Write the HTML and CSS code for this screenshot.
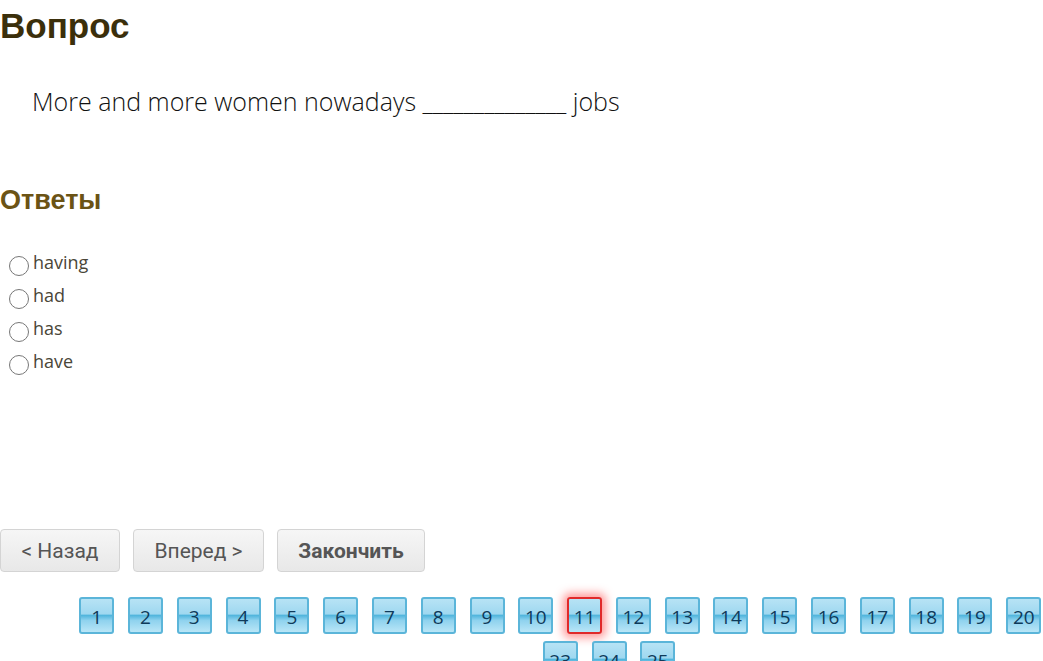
FILE: index.html
```html
<!DOCTYPE html>
<html lang="ru">
<head>
    <meta charset="UTF-8" />
    <title>Вопрос</title>
    <link rel="stylesheet" href="styles.css">
</head>
<body>
    <div class="page">
        <h1>Вопрос</h1>
        <div class="question">More and more women nowadays ______________ jobs</div>

        <h2>Ответы</h2>
        <div class="answers">
            <label class="answer"><input type="radio" name="a" /><span>having</span></label>
            <label class="answer"><input type="radio" name="a" /><span>had</span></label>
            <label class="answer"><input type="radio" name="a" /><span>has</span></label>
            <label class="answer"><input type="radio" name="a" /><span>have</span></label>
        </div>

        <div class="nav">
            <button class="btn">&lt; Назад</button>
            <button class="btn">Вперед &gt;</button>
            <button class="btn btn-finish">Закончить</button>
        </div>

        <div class="pager">
            <a class="page-num">1</a>
            <a class="page-num">2</a>
            <a class="page-num">3</a>
            <a class="page-num">4</a>
            <a class="page-num">5</a>
            <a class="page-num">6</a>
            <a class="page-num">7</a>
            <a class="page-num">8</a>
            <a class="page-num">9</a>
            <a class="page-num">10</a>
            <a class="page-num current">11</a>
            <a class="page-num">12</a>
            <a class="page-num">13</a>
            <a class="page-num">14</a>
            <a class="page-num">15</a>
            <a class="page-num">16</a>
            <a class="page-num">17</a>
            <a class="page-num">18</a>
            <a class="page-num">19</a>
            <a class="page-num">20</a>
            <a class="page-num">21</a>
            <a class="page-num">22</a>
            <a class="page-num">23</a>
            <a class="page-num">24</a>
            <a class="page-num">25</a>
        </div>
    </div>
</body>
</html>
```

FILE: styles.css
```css
body {
    margin: 0;
    background: #ffffff;
    font-family: Roboto, "Liberation Sans", sans-serif;
}

.page {
    width: 1043px;
}

h1 {
    margin: 0;
    padding-top: 4px;
    font-family: "Liberation Sans", Arial, sans-serif;
    font-size: 35px;
    line-height: 44px;
    font-weight: bold;
    color: #3b2f0b;
}

.question {
    padding: 37px 0 0 32px;
    font-family: "Open Sans", sans-serif;
    font-weight: 300;
    font-size: 25px;
    line-height: 32px;
    color: #111;
}

h2 {
    margin: 65px 0 0 0;
    font-family: "Liberation Sans", Arial, sans-serif;
    font-size: 27px;
    line-height: 36px;
    font-weight: bold;
    color: #6b5315;
}

.answers {
    margin-top: 29px;
    display: flex;
    flex-direction: column;
    gap: 3px;
}

.answer {
    display: flex;
    align-items: flex-start;
    height: 30px;
    font-family: "Open Sans", sans-serif;
    font-size: 18px;
    line-height: 30px;
    color: #4a4638;
}

.answer input {
    margin: 9px 4px 0 9px;
    width: 20px;
    height: 20px;
    appearance: none;
    border: 1px solid #777;
    border-radius: 50%;
    background: #fff;
}

.nav {
    margin-top: 153px;
    display: flex;
    gap: 13px;
}

.btn {
    height: 43px;
    padding: 0 10px;
    font-family: Roboto, sans-serif;
    font-size: 21px;
    color: #555;
    background: linear-gradient(#f6f6f6, #e8e8e8);
    border: 1px solid #d4d4d4;
    border-radius: 4px;
}

.btn:first-child {
    width: 120px;
}

.btn:nth-child(2) {
    width: 131px;
}

.btn-finish {
    width: 148px;
    font-weight: bold;
}

.pager {
    width: 1100px;
    margin: 25px 0 0 59px;
    display: flex;
    flex-wrap: wrap;
    justify-content: center;
    column-gap: 13.8px;
    row-gap: 7px;
}

.page-num {
    box-sizing: border-box;
    width: 35px;
    height: 37px;
    display: flex;
    align-items: center;
    justify-content: center;
    padding-top: 3px;
    font-family: "Open Sans", sans-serif;
    font-size: 19px;
    color: #0e3a5a;
    border: 2px solid #5bb5d9;
    border-radius: 3px;
    background: linear-gradient(#b7e3f5 0%, #9fd8f0 45%, #52b6dd 50%, #8fd2ee 65%, #b9e6f7 100%);
}

.page-num.current {
    border-color: #e0292a;
    box-shadow: 0 0 9px 4px rgba(255, 60, 60, 0.5);
}
```
